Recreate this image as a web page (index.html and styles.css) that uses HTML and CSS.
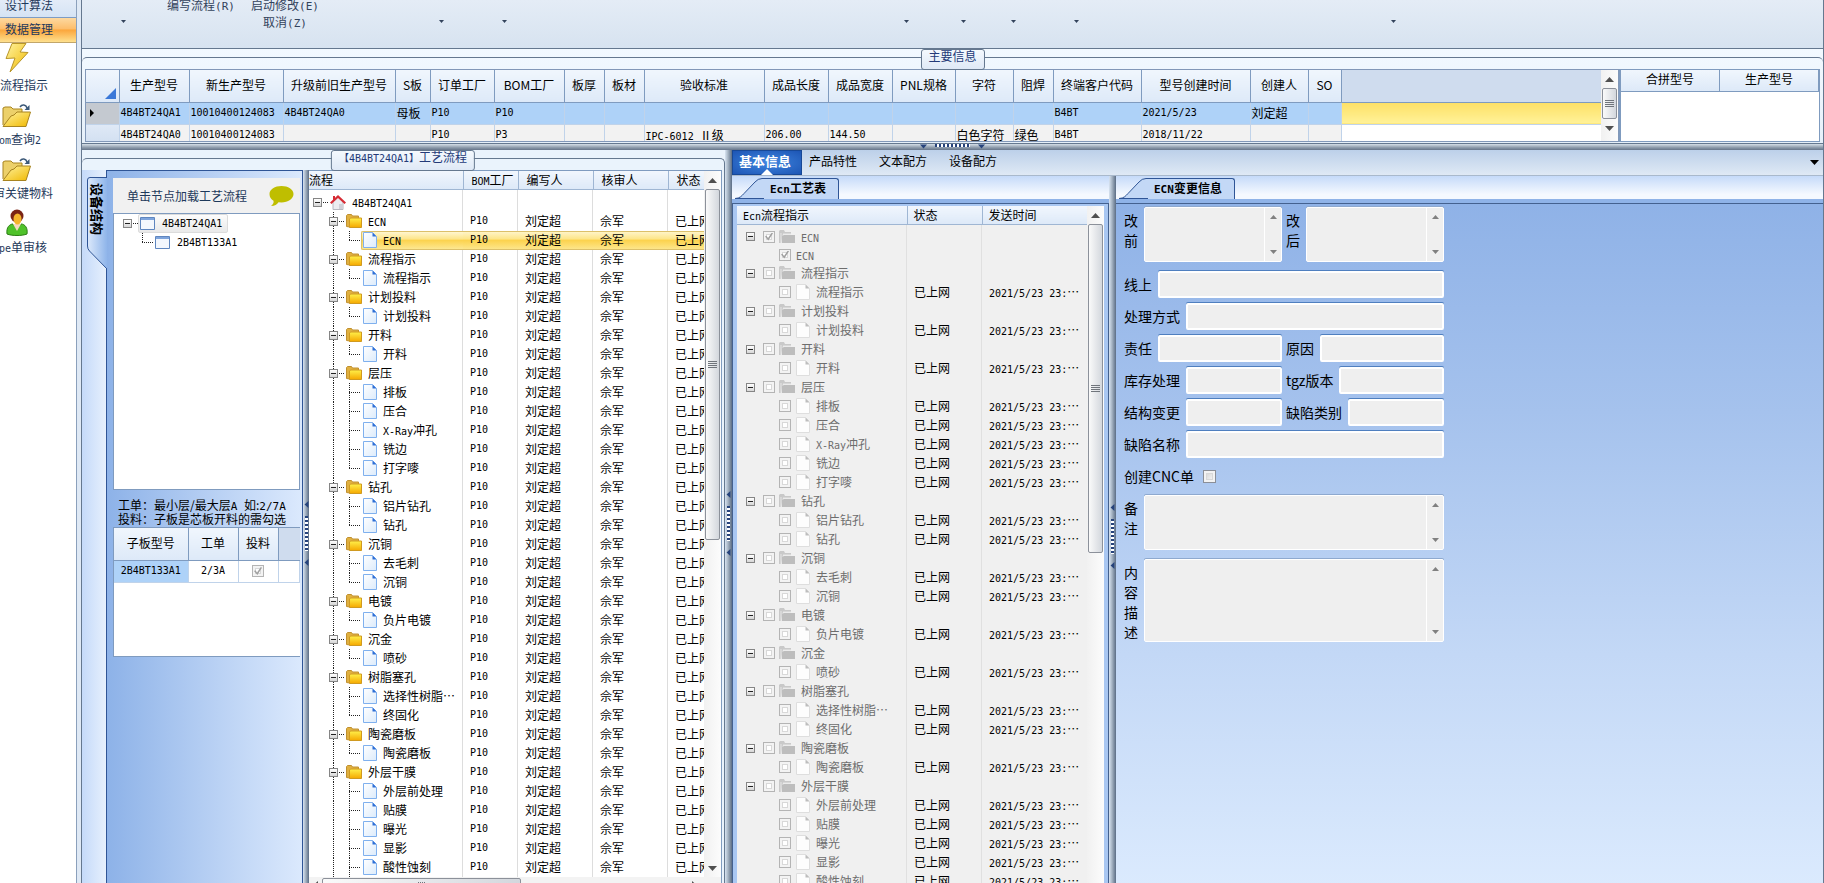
FILE: index.html
```
<!DOCTYPE html>
<html lang="zh-CN">

<head>
    <meta charset="UTF-8">
    <meta name="viewport" content="width=device-width, initial-scale=1.0">
    <title>工艺流程</title>
    <link rel="stylesheet" href="styles.css">
</head>

<body>
    <!-- Shared icons -->
    <svg class="symbols" aria-hidden="true">
        <defs>
            <linearGradient id="gold" x1="0" y1="0" x2="1" y2="1">
                <stop offset="0" stop-color="#fff3a0" />
                <stop offset="1" stop-color="#f0b800" />
            </linearGradient>
            <linearGradient id="amber" x1="0" y1="0" x2="0" y2="1">
                <stop offset="0" stop-color="#fff04a" />
                <stop offset="1" stop-color="#f5a800" />
            </linearGradient>
            <linearGradient id="sheet" x1="0" y1="0" x2="1" y2="1">
                <stop offset="0" stop-color="#ffffff" />
                <stop offset="1" stop-color="#dcebfb" />
            </linearGradient>
        </defs>
        <symbol id="i-folder" viewBox="0 0 16 14">
            <path d="M.5 12.5v-11l1-1h4l1 1.5h6v3H4v8z" fill="#e0b040" stroke="#c09030" />
            <path d="M3.5 13.5V5l1-1h11v9.5z" fill="url(#amber)" stroke="#d09a20" />
        </symbol>
        <symbol id="i-folder-off" viewBox="0 0 16 14">
            <path d="M0 13V1l1-1h4l1 2h6v2H4L2 13z" fill="#c9c9c9" />
            <path d="M3 13V6l2-1h11v8z" fill="#bdbdbd" />
            <path d="M2 3v10M4 4h8" stroke="#e6e6e6" />
        </symbol>
        <symbol id="i-file" viewBox="0 0 14 16">
            <path d="M.5.5h9l4 4v11H.5z" fill="url(#sheet)" stroke="#7fb0ee" />
            <path d="M9.5.5l4 4h-4z" fill="#2f6fd6" />
        </symbol>
        <symbol id="i-file-off" viewBox="0 0 14 16">
            <path d="M.5.5h9l4 4v11H.5z" fill="#fdfdfd" stroke="#dedede" />
            <path d="M9.5.5l4 4h-4z" fill="#bdbdbd" />
        </symbol>
        <symbol id="i-house" viewBox="0 0 16 16">
            <path d="M3 8l5-5 5 5v7.500H3z" fill="#ececf0" stroke="#b8b8c0" />
            <path d="M3 2h2v4H3zM0 8.500L8 1l8 7.500-1.500 1.500L8 4l-6.500 6z" fill="#d62b34" />
            <path d="M9 10h3v5H9z" fill="#d0d0d8" />
        </symbol>
        <symbol id="i-window" viewBox="0 0 15 13">
            <path d="M.5.5h14v12H.5z" fill="#f3f7fd" stroke="#5f86bf" />
            <path d="M1 1h13v2H1z" fill="#7ea4dc" />
        </symbol>
        <symbol id="i-open" viewBox="0 0 30 25">
            <path d="M1 22V5l2-1h6l2 2h9v5" fill="#ecd06a" stroke="#a88420" />
            <path d="M1 23.500L9 13l3-1 3-3h13.500l-4.500 14.500z" fill="url(#gold)" stroke="#a88420" />
            <path d="M18 4c2-3 6-2.500 7 1" fill="none" stroke="#3b5878" stroke-width="1.500" />
            <path d="M27.500 2v5h-5z" fill="#3b5878" />
        </symbol>
        <symbol id="i-up" viewBox="0 0 9 5">
            <path d="M0 5l4.500-5L9 5z" fill="currentColor" />
        </symbol>
        <symbol id="i-down" viewBox="0 0 9 5">
            <path d="M0 0h9L4.500 5z" fill="currentColor" />
        </symbol>
    </svg>

    <!-- Navigation -->
    <nav class="sidebar">
        <a href="#" class="nav-group">设计算法</a>
        <a href="#" class="nav-group active">数据管理</a>
        <div class="nav-items">
            <a href="#" class="nav-item">
                <svg width="24" height="32" viewBox="0 0 24 32"><path d="M7 1.500h14L15 10l8 .5L5 30l5-14-9 .5z" fill="url(#gold)" stroke="#b8962a" stroke-linejoin="round" /></svg>
                <span class="indent">流程指示</span>
            </a>
            <a href="#" class="nav-item">
                <svg width="30" height="25"><use href="#i-open" /></svg>
                <span><b class="en">Bom</b>查询<b class="en">2</b></span>
            </a>
            <a href="#" class="nav-item">
                <svg width="30" height="25"><use href="#i-open" /></svg>
                <span>评审关键物料</span>
            </a>
            <a href="#" class="nav-item">
                <svg width="22" height="28" viewBox="0 0 22 28">
                    <path d="M1 26c-1-7 3-10 6-10l4 5 4-5c4 0 7 4 6 10-5 2-15 2-20 0z" fill="#4fc22a" stroke="#2c7d15" />
                    <path d="M7 16l4 7 4-7z" fill="#f7d9c0" />
                    <circle cx="11" cy="8" r="6.500" fill="#7a2415" />
                    <ellipse cx="11.500" cy="11" rx="4" ry="5.500" fill="#f5b52c" />
                </svg>
                <span><b class="en">Type</b>单审核</span>
            </a>
        </div>
    </nav>

    <main>
        <!-- Ribbon -->
        <div class="ribbon">
            <button class="rb c1" aria-label="菜单"><svg class="caret"><use href="#i-down" /></svg></button>
            <button class="rb text c2">编写流程<b class="en">(R)</b></button>
            <button class="rb text c3">启动修改<b class="en">(E)</b><br>取消<b class="en">(Z)</b></button>
            <button class="rb c5" aria-label="菜单"><svg class="caret"><use href="#i-down" /></svg></button>
            <button class="rb c6" aria-label="菜单"><svg class="caret"><use href="#i-down" /></svg></button>
            <button class="rb c8" aria-label="菜单"><svg class="caret"><use href="#i-down" /></svg></button>
            <button class="rb c9" aria-label="菜单"><svg class="caret"><use href="#i-down" /></svg></button>
            <button class="rb c10" aria-label="菜单"><svg class="caret"><use href="#i-down" /></svg></button>
            <button class="rb c11" aria-label="菜单"><svg class="caret"><use href="#i-down" /></svg></button>
            <button class="rb c13" aria-label="菜单"><svg class="caret"><use href="#i-down" /></svg></button>
        </div>

        <!-- Main info -->
        <section class="info">
            <div class="frame">
                <h2 class="badge">主要信息</h2>
                <div class="info-body">
                    <div class="info-grid">
                        <table class="grid">
                            <colgroup>
                                <col class="w33"><col class="w70"><col class="w94"><col class="w112"><col class="w35"><col class="w64"><col class="w70">
                                <col class="w40"><col class="w40"><col class="w120"><col class="w64"><col class="w64"><col class="w63"><col class="w58">
                                <col class="w40"><col class="w88"><col class="w109"><col class="w58"><col class="w33"><col>
                            </colgroup>
                            <thead>
                                <tr>
                                    <th class="corner"><svg width="11" height="11"><path d="M11 0v11H0z" fill="#3b78d8" /></svg></th>
                                    <th>生产型号</th><th>新生产型号</th><th>升级前旧生产型号</th><th>S板</th><th>订单工厂</th><th>BOM工厂</th>
                                    <th>板厚</th><th>板材</th><th>验收标准</th><th>成品长度</th><th>成品宽度</th><th>PNL规格</th><th>字符</th>
                                    <th>阻焊</th><th>终端客户代码</th><th>型号创建时间</th><th>创建人</th><th>SO</th><th class="rest"></th>
                                </tr>
                            </thead>
                            <tbody>
                                <tr class="current">
                                    <td class="rowhead"><svg width="4" height="8"><path d="M0 0l4 4-4 4z" /></svg></td>
                                    <td class="en">4B4BT24QA1</td><td class="en">10010400124083</td><td class="en">4B4BT24QA0</td><td>母板</td>
                                    <td class="en">P10</td><td class="en">P10</td><td></td><td></td><td></td><td></td><td></td><td></td><td></td><td></td>
                                    <td class="en">B4BT</td><td class="en">2021/5/23</td><td>刘定超</td><td></td><td class="rest"></td>
                                </tr>
                                <tr>
                                    <td class="rowhead"></td>
                                    <td class="en">4B4BT24QA0</td><td class="en">10010400124083</td><td></td><td></td>
                                    <td class="en">P10</td><td class="en">P3</td><td></td><td></td><td><b class="en">IPC-6012 </b>Ⅱ级</td>
                                    <td class="en">206.00</td><td class="en">144.50</td><td></td><td>白色字符</td><td>绿色</td>
                                    <td class="en">B4BT</td><td class="en">2018/11/22</td><td></td><td></td><td class="rest"></td>
                                </tr>
                            </tbody>
                        </table>
                        <div class="vscroll">
                            <svg class="arrow"><use href="#i-up" /></svg>
                            <div class="thumb short"><i></i></div>
                            <svg class="arrow"><use href="#i-down" /></svg>
                        </div>
                    </div>
                    <div class="merge">
                        <table class="grid">
                            <thead><tr><th>合拼型号</th><th>生产型号</th></tr></thead>
                        </table>
                    </div>
                </div>
            </div>
        </section>

        <div class="split-h"><svg class="tri"><use href="#i-down" /></svg><i></i><svg class="tri"><use href="#i-down" /></svg></div>

        <div class="work">
            <!-- Process flow -->
            <section class="process">
                <div class="frame">
                    <h2 class="badge"><b class="en">【4B4BT24QA1】</b>工艺流程</h2>
                    <div class="process-body">
                        <div class="dock">
                            <button class="side-tab">
                                <svg width="20" height="96" viewBox="0 0 20 96">
                                    <defs><linearGradient id="tabfill"><stop offset="0" stop-color="#dce9fb" /><stop offset="1" stop-color="#8fb5ea" /></linearGradient></defs>
                                    <path d="M20 0.500v3H3q-2.500 0-2.500 2.500v66q0 3 2 5l17.500 18" fill="url(#tabfill)" stroke="#2f5596" />
                                </svg>
                                <span>设备结构</span>
                            </button>
                        </div>
                        <div class="device">
                            <div class="tip">
                                <span>单击节点加载工艺流程</span>
                                <svg width="25" height="22" viewBox="0 0 25 22"><path d="M12.500 1C19 1 24.500 4.500 24.500 9S19 17.500 12.500 17.500l-3-.2C8 19.500 6 21 2 21c2-1.500 3-3 2.500-5.200C2 14.500.5 12 .5 9 .5 4.500 6 1 12.500 1z" fill="#bfbe00" /></svg>
                            </div>
                            <ul class="device-tree">
                                <li><span class="toggle"></span><span class="stub"></span><span class="node on"><svg width="15" height="13"><use href="#i-window" /></svg><b class="en">4B4BT24QA1</b></span></li>
                                <li class="child"><span class="branch last"></span><span class="node"><svg width="15" height="13"><use href="#i-window" /></svg><b class="en">2B4BT133A1</b></span></li>
                            </ul>
                            <p class="hint">工单：最小层/最大层<b class="en">A </b>如:<b class="en">2/7A</b><br>投料：子板是芯板开料的需勾选</p>
                            <div class="sub-box">
                                <table class="grid sub">
                                    <colgroup><col class="w74"><col class="w50"><col class="w40"><col></colgroup>
                                    <thead><tr><th>子板型号</th><th>工单</th><th>投料</th><th class="rest"></th></tr></thead>
                                    <tbody><tr><td class="en picked">2B4BT133A1</td><td class="en">2/3A</td><td><input type="checkbox" class="check" aria-label="投料" checked disabled></td><td></td></tr></tbody>
                                </table>
                            </div>
                        </div>
                        <div class="split-v"><svg class="tri"><use href="#i-down" /></svg><i></i><svg class="tri"><use href="#i-down" /></svg></div>
                        <div class="flow">
                            <div class="flow-top">
                                <div class="clip">
                                    <table class="tree">
                                        <colgroup><col class="w154"><col class="w55"><col class="w75"><col class="w75"><col></colgroup>
                                        <thead><tr><th class="tight">流程</th><th><b class="en">BOM</b>工厂</th><th>编写人</th><th>核审人</th><th>状态</th></tr></thead>
                                        <tbody id="flow-rows"></tbody>
                                    </table>
                                </div>
                                <div class="vscroll">
                                    <svg class="arrow"><use href="#i-up" /></svg>
                                    <div class="thumb long"><i></i></div>
                                    <svg class="arrow end"><use href="#i-down" /></svg>
                                </div>
                            </div>
                            <div class="hscroll">
                                <svg class="arrow left"><use href="#i-down" /></svg>
                                <div class="thumb"><i></i></div>
                                <svg class="arrow right"><use href="#i-down" /></svg>
                            </div>
                        </div>
                    </div>
                </div>
            </section>

            <div class="split-v wide"><svg class="tri"><use href="#i-down" /></svg><i></i><svg class="tri"><use href="#i-down" /></svg></div>

            <!-- Details -->
            <section class="details">
                <div class="tabs">
                    <button class="tab active">基本信息</button>
                    <button class="tab">产品特性</button>
                    <button class="tab">文本配方</button>
                    <button class="tab">设备配方</button>
                    <svg class="more"><use href="#i-down" /></svg>
                </div>
                <div class="details-body">
                    <div class="pane ecn">
                        <div class="strip">
                            <button class="ptab"><svg width="30" height="21"><path d="M0 20.500c5 0 7-3 9-5L20 4q3-3.500 7-3.500h3v20z" fill="#c3d8f6" stroke="#2f5596" /></svg><span><b class="en">Ecn</b>工艺表</span></button>
                        </div>
                        <div class="pane-body">
                            <div class="clip">
                                <table class="tree off">
                                    <colgroup><col class="w170"><col class="w75"><col></colgroup>
                                    <thead><tr><th><b class="en">Ecn</b>流程指示</th><th>状态</th><th>发送时间</th></tr></thead>
                                    <tbody id="ecn-rows"></tbody>
                                </table>
                            </div>
                            <div class="vscroll">
                                <svg class="arrow"><use href="#i-up" /></svg>
                                <div class="thumb mid"><i></i></div>
                            </div>
                        </div>
                    </div>
                    <div class="split-v wide"><svg class="tri"><use href="#i-down" /></svg><i></i><svg class="tri"><use href="#i-down" /></svg></div>
                    <div class="pane change">
                        <div class="strip">
                            <button class="ptab"><svg width="30" height="21"><path d="M0 20.500c5 0 7-3 9-5L20 4q3-3.500 7-3.500h3v20z" fill="#c3d8f6" stroke="#2f5596" /></svg><span><b class="en">ECN</b>变更信息</span></button>
                        </div>
                        <div class="pane-body">
                            <form class="form">
                                <div class="field area"><label for="before">改前</label><div class="memo"><textarea id="before" readonly></textarea><div class="bar"><svg><use href="#i-up" /></svg><svg><use href="#i-down" /></svg></div></div></div>
                                <div class="field area"><label for="after">改后</label><div class="memo"><textarea id="after" readonly></textarea><div class="bar"><svg><use href="#i-up" /></svg><svg><use href="#i-down" /></svg></div></div></div>
                                <div class="field full"><label for="online">线上</label><input id="online" type="text" readonly></div>
                                <div class="field full"><label for="method">处理方式</label><input id="method" type="text" readonly></div>
                                <div class="field"><label for="duty">责任</label><input id="duty" type="text" readonly></div>
                                <div class="field"><label for="reason">原因</label><input id="reason" type="text" readonly></div>
                                <div class="field"><label for="stock">库存处理</label><input id="stock" type="text" readonly></div>
                                <div class="field"><label for="tgz">tgz版本</label><input id="tgz" type="text" readonly></div>
                                <div class="field"><label for="struct">结构变更</label><input id="struct" type="text" readonly></div>
                                <div class="field"><label for="kind">缺陷类别</label><input id="kind" type="text" readonly></div>
                                <div class="field full"><label for="defect">缺陷名称</label><input id="defect" type="text" readonly></div>
                                <div class="field full"><label for="cnc">创建CNC单</label><input id="cnc" class="check live" type="checkbox"></div>
                                <div class="field area full"><label for="remark">备注</label><div class="memo"><textarea id="remark" readonly></textarea><div class="bar"><svg><use href="#i-up" /></svg><svg><use href="#i-down" /></svg></div></div></div>
                                <div class="field area full tall"><label for="content">内容描述</label><div class="memo"><textarea id="content" readonly></textarea><div class="bar"><svg><use href="#i-up" /></svg><svg><use href="#i-down" /></svg></div></div></div>
                            </form>
                        </div>
                    </div>
                </div>
            </section>
        </div>
    </main>

    <script src="script.js"></script>
</body>

</html>
```
FILE: styles.css
```
* {
    box-sizing: border-box;
}

html {
    height: 100%;
    overflow: hidden;
}

/* the window runs a little past the bottom of the screen */
body {
    margin: 0;
    height: calc(100vh + 14px);
    overflow: hidden;
    display: flex;
    font-family: "Noto Sans CJK SC", sans-serif;
    font-size: 12px;
    line-height: 18px;
    color: #000;
    background-color: #dfe9f5;
}

button,
input,
textarea {
    font: inherit;
    color: inherit;
    margin: 0;
    padding: 0;
    border: 0;
    background: none;
}

svg {
    display: block;
    flex: none;
}

a {
    color: inherit;
    text-decoration: none;
}

h2,
p,
ul {
    margin: 0;
    padding: 0;
    list-style: none;
}

table {
    border-collapse: collapse;
    table-layout: fixed;
    width: 100%;
}

.symbols {
    position: absolute;
    width: 0;
    height: 0;
}

/* fixed width latin text */
.en {
    font-family: "DejaVu Sans Mono", "Noto Sans CJK SC", monospace;
    font-size: 10px;
    font-weight: normal;
}

b.en {
    line-height: 10px;
}

/* column widths */
.w33 { width: 33px; }
.w35 { width: 35px; }
.w40 { width: 40px; }
.w50 { width: 50px; }
.w55 { width: 55px; }
.w58 { width: 58px; }
.w63 { width: 63px; }
.w64 { width: 64px; }
.w70 { width: 70px; }
.w74 { width: 74px; }
.w75 { width: 75px; }
.w88 { width: 88px; }
.w94 { width: 94px; }
.w109 { width: 109px; }
.w112 { width: 112px; }
.w120 { width: 120px; }
.w154 { width: 154px; }
.w170 { width: 170px; }

/* Navigation */
.sidebar {
    flex: none;
    width: 77px;
    overflow: hidden;
    background-color: #fff;
    border-right: 1px solid #8ba0bc;
    color: #1e395b;
}

.nav-group {
    display: block;
    height: 18px;
    padding-left: 5px;
    line-height: 10px;
    background-image: linear-gradient(#e3ecf8, #d5e3f4);
    border-bottom: 1px solid #7d9cc4;
}

.nav-group.active {
    height: 25px;
    line-height: 22px;
    background-image: linear-gradient(#fdd9a0, #fdbe6c 45%, #fba63c 50%, #fee08e);
    border-bottom-color: #c2a66a;
}

.nav-items {
    width: 34px;
}

.nav-item {
    display: flex;
    flex-direction: column;
    align-items: center;
    justify-content: flex-end;
    gap: 2px;
    height: 54px;
    padding-bottom: 3px;
    white-space: nowrap;
}

.nav-item .indent {
    padding-left: 14px;
}

main {
    flex: 1;
    min-width: 0;
    display: flex;
    flex-direction: column;
    margin-left: 4px;
    border-left: 1px solid #65788f;
    border-right: 1px solid #65788f;
}

/* Ribbon */
.ribbon {
    flex: none;
    height: 48px;
    display: grid;
    grid-template-columns: 82px 74px 94px 78px 63px 62px 343px 56px 58px 43px 82px 246px 60px;
    background-image: linear-gradient(#e4ecf6, #d7e3f0);
    color: #33435c;
}

.rb {
    grid-row: 1;
    display: flex;
    justify-content: center;
    padding-top: 20px;
}

.rb.text {
    display: block;
    padding-top: 0;
    margin-top: -4px;
    line-height: 17px;
    height: 34px;
    white-space: nowrap;
}

.rb.text .en {
    font-size: 11px;
}

.rb.text.c2 {
    height: 17px;
}

.c1 { grid-column: 1; }
.c2 { grid-column: 2; }
.c3 { grid-column: 3; }
.c5 { grid-column: 5; }
.c6 { grid-column: 6; }
.c8 { grid-column: 8; }
.c9 { grid-column: 9; }
.c10 { grid-column: 10; }
.c11 { grid-column: 11; }
.c13 { grid-column: 13; }

.caret {
    width: 5px;
    height: 3px;
}

/* Framed groups */
.frame {
    position: relative;
    margin-top: 8px;
    border-top: 1px solid #65788f;
    border-radius: 5px 5px 0 0;
}

.badge {
    position: absolute;
    top: -9px;
    left: 50%;
    transform: translateX(-50%);
    height: 21px;
    padding: 0 7px;
    font-size: 12px;
    font-weight: normal;
    line-height: 12px;
    white-space: nowrap;
    color: #243a78;
    background-image: linear-gradient(#f4f9fe, #dfe9f6);
    border: 1px solid #65788f;
    border-radius: 3px;
    z-index: 1;
}

.info {
    flex: none;
    height: 96px;
    border-top: 1px solid #65788f;
    background-image: linear-gradient(#f2f9ff, #e6f0fa);
    border-bottom: 1px solid #65788f;
}

.info-body {
    display: flex;
    height: 74px;
    margin-top: 11px;
    padding: 0 3px 1px;
}

.info-grid {
    flex: 1;
    display: flex;
    overflow: hidden;
    border: 1px solid #8298b8;
    background-color: #fff;
}

/* Grid tables */
.grid th {
    height: 32px;
    padding: 0 0 2px;
    line-height: 16px;
    font-weight: normal;
    white-space: nowrap;
    background-image: linear-gradient(#f0f6fd, #dde9f8);
    border-right: 1px solid #7f9bbf;
    border-bottom: 1px solid #7f9bbf;
}

.grid td {
    height: 22px;
    padding: 0 1px;
    line-height: 20px;
    white-space: nowrap;
    overflow: hidden;
    background-color: #f2f2f2;
    border-right: 1px solid #c0d3ea;
    border-bottom: 1px solid #c0d3ea;
}

.grid .current td {
    background-color: #aed2f8;
}

.grid th.rest {
    background: #cfdcee;
    border-right: 0;
}

.grid td.rest {
    background-color: #fff;
    border-right: 0;
}

.grid .current td.rest {
    background-image: linear-gradient(#fee065, #fff299);
}

.grid td.rowhead {
    background-image: linear-gradient(#dfe9f6, #d0def0);
}

.grid .current td.rowhead {
    padding-left: 4px;
    background: #c4c9d0;
}

.corner svg {
    margin: 18px 0 0 19px;
}

.merge {
    width: 201px;
    flex: none;
    background-color: #fff;
    border: 1px solid #7f9bbf;
    border-width: 1px 1px 1px 2px;
}

.merge .grid th {
    height: 21px;
}

/* Scroll bars */
.vscroll {
    flex: none;
    width: 17px;
    display: flex;
    flex-direction: column;
    align-items: center;
    background-image: linear-gradient(90deg, #f1f1f1, #fcfcfc);
}

.arrow {
    width: 9px;
    height: 5px;
    margin: 7px 0 6px;
    color: #505050;
}

.arrow.end {
    margin-top: auto;
}

.thumb {
    display: flex;
    align-items: center;
    justify-content: center;
    width: 15px;
    background-image: linear-gradient(90deg, #fafafa, #d3d7dd);
    border: 1px solid #8c919a;
    border-radius: 2px;
}

.thumb i {
    width: 9px;
    height: 7px;
    background-image: repeating-linear-gradient(#70757c 0 1px, transparent 1px 2px);
}

.thumb.short { height: 31px; }
.thumb.mid { height: 329px; }
.thumb.long { height: 351px; }

.hscroll {
    flex: none;
    display: flex;
    align-items: center;
    height: 16px;
    padding: 0 20px 0 0;
    background-color: #f3f3f3;
}

.hscroll .thumb {
    width: 199px;
    height: 14px;
}

.hscroll .thumb i {
    width: 8px;
    background-image: repeating-linear-gradient(90deg, #70757c 0 1px, transparent 1px 2px);
}

.hscroll .arrow {
    margin: 0 2px;
}

.left { transform: rotate(90deg); }

.hscroll .right {
    transform: rotate(-90deg);
    margin-left: auto;
}

/* Splitters */
.split-h {
    flex: none;
    height: 6px;
    display: flex;
    justify-content: center;
    gap: 8px;
    background-image: linear-gradient(#d5dfe8, #8c9aaa 60%, #66758a);
}

.split-h i {
    width: 35px;
    height: 3px;
    background-image: repeating-linear-gradient(90deg, #26437c 0 2px, #fff 2px 4px);
}

.tri {
    width: 7px;
    height: 5px;
    color: #26437c;
}

.split-v {
    flex: none;
    width: 6px;
    display: flex;
    flex-direction: column;
    align-items: center;
    justify-content: center;
    gap: 9px;
    background-image: linear-gradient(90deg, #d8e4f2, #a9b7c6 40%, #5b6d85);
}

.split-v.wide {
    width: 7px;
}

.split-v .tri {
    transform: rotate(90deg);
}

.split-v i {
    width: 3px;
    height: 35px;
    background-image: repeating-linear-gradient(#26437c 0 2px, #fff 2px 4px);
}

/* Work area */
.work {
    flex: 1;
    min-height: 0;
    display: flex;
}

.process {
    flex: none;
    width: 643px;
    display: flex;
    background-color: #eaf3fc;
}

.process .frame {
    flex: 1;
    display: flex;
    border-right: 1px solid #65788f;
}

.process-body {
    flex: 1;
    min-width: 0;
    display: flex;
    margin-top: 11px;
    padding-right: 2px;
}

.dock {
    flex: none;
    width: 25px;
    padding: 4px 0 0 5px;
    background-image: linear-gradient(90deg, #c5daf9, #e6f0fd);
    border-right: 1px solid #2f5596;
}

.side-tab {
    display: block;
    position: relative;
    width: 20px;
    height: 96px;
}

.side-tab span {
    position: absolute;
    top: 9px;
    left: 1px;
    writing-mode: vertical-rl;
    text-orientation: sideways;
    font-size: 13px;
    font-weight: bold;
}

.device {
    flex: none;
    width: 196px;
    padding: 7px 2px 0 6px;
    background-image: linear-gradient(90deg, #8db2e8, #dbe9fd);
    border-top: 1px solid #2f5596;
    border-right: 1px solid #2f5596;
}

.tip {
    display: flex;
    align-items: center;
    justify-content: space-between;
    height: 35px;
    padding: 0 6px 0 14px;
    color: #1e395b;
    background-color: #f1f1f1;
}

.device-tree {
    height: 277px;
    padding: 0 0 0 9px;
    background-color: #fff;
    border: 1px solid #7f9bbf;
}

.device-tree li {
    display: flex;
    align-items: center;
    height: 19px;
}

.device-tree .child {
    padding-left: 19px;
}

.node {
    display: flex;
    align-items: center;
    gap: 7px;
    height: 19px;
    padding: 0 6px 0 1px;
}

.node.on {
    background-image: linear-gradient(#fcfcfc, #e9e9e9);
    border: 1px solid #dcdcdc;
    border-radius: 2px;
    padding: 0 5px 0 1px;
}

.toggle {
    flex: none;
    width: 9px;
    height: 9px;
    border: 1px solid #858585;
    background: linear-gradient(#222, #222) center / 5px 1px no-repeat, linear-gradient(#fff, #d6d6d6);
}

.stub {
    flex: none;
    width: 6px;
    height: 1px;
    background-image: repeating-linear-gradient(90deg, transparent 0 1px, #222 1px 2px);
}

/* dotted connector in front of a leaf */
.branch {
    flex: none;
    width: 12px;
    height: 19px;
    background: repeating-linear-gradient(#222 0 1px, transparent 1px 2px) left top / 1px 19px no-repeat,
        repeating-linear-gradient(90deg, #222 0 1px, transparent 1px 2px) left center / 11px 1px no-repeat;
}

.branch.last {
    background-size: 1px 10px, 11px 1px;
}

.hint {
    height: 37px;
    padding: 8px 0 0 5px;
    line-height: 14px;
    white-space: nowrap;
}

.hint .en {
    font-size: 11px;
}

.sub-box {
    height: 130px;
    background-color: #fff;
    border: 1px solid #7f9bbf;
    border-right: 0;
}

.sub td {
    text-align: center;
    background-color: #fff;
}

.sub td.picked {
    background-color: #aed2f8;
}

/* Check boxes */
.check {
    appearance: none;
    flex: none;
    width: 12px;
    height: 12px;
    border: 1px solid #b4b4b4;
    background: #fff;
    box-shadow: inset 0 0 0 2px #f3f3f3, inset 0 0 0 3px #d8d8d8;
}

.check:checked::before {
    content: "";
    display: block;
    width: 8px;
    height: 8px;
    margin: 1px;
    background-color: #a0a0a0;
    clip-path: polygon(0 50%, 18% 40%, 38% 68%, 85% 0, 100% 8%, 42% 100%);
}

.sub .check {
    display: block;
    margin: 0 auto;
}

.check.live {
    width: 13px;
    height: 13px;
    border-color: #8b8f98;
    background-image: linear-gradient(135deg, #ccc, #fff);
}

/* Tree tables */
.flow {
    flex: 1;
    min-width: 0;
    display: flex;
    flex-direction: column;
    background-color: #fff;
    border-top: 1px solid #7f9bbf;
    border-right: 1px solid #7f9bbf;
    margin-bottom: 4px;
}

.flow-top {
    flex: 1;
    min-height: 0;
    display: flex;
}

.clip {
    flex: 1;
    min-width: 0;
    overflow: hidden;
    background-image: linear-gradient(#ddd, #ddd), linear-gradient(#ddd, #ddd), linear-gradient(#ddd, #ddd), linear-gradient(#ddd, #ddd);
    background-size: 1px 100%;
    background-position: 153px 0, 208px 0, 283px 0, 358px 0;
    background-repeat: no-repeat;
}

.tree th {
    height: 18px;
    padding: 0 0 0 8px;
    line-height: 16px;
    font-weight: normal;
    text-align: left;
    white-space: nowrap;
    overflow: hidden;
    background-image: linear-gradient(#f1f6fd, #dde9f8);
    border-right: 1px solid #9fb6d3;
    border-bottom: 1px solid #9fb6d3;
}

.tree th.tight {
    padding-left: 0;
}

.tree th:last-child {
    border-right: 0;
}

.tree tbody::before {
    content: "";
    display: block;
    height: 3px;
}

.tree td {
    height: 19px;
    padding: 0 0 0 7px;
    line-height: 18px;
    white-space: nowrap;
    overflow: hidden;
}

.tree td.name {
    padding: 0;
}

.cell {
    display: flex;
    align-items: center;
    height: 19px;
}

.lv0 {
    padding-left: 4px;
}

.lv1 {
    padding-left: 20px;
    background: repeating-linear-gradient(#222 0 1px, transparent 1px 2px) 24px 0 / 1px 100% no-repeat;
}

.lv2 {
    padding-left: 40px;
    background: repeating-linear-gradient(#222 0 1px, transparent 1px 2px) 24px 0 / 1px 100% no-repeat;
}

.cell .label {
    display: flex;
    align-items: center;
    height: 19px;
    flex: 1;
    gap: 6px;
    padding-left: 2px;
}

.lv2 .label {
    gap: 6px;
}

.selected .label {
    border: solid #dcc06a;
    border-width: 1px 0 1px 1px;
    border-radius: 2px 0 0 2px;
    padding-left: 1px;
}

.selected .label,
.selected td:not(.name) {
    background-image: linear-gradient(#fff6cf, #fde68c 40%, #fcd34f 50%, #fde891);
}

.selected td:not(.name) {
    box-shadow: inset 0 1px #dcc06a, inset 0 -1px #dcc06a;
}

.off .cell {
    background: none;
    color: #6d6d6d;
}

.off .lv1 {
    padding-left: 9px;
}

.off .lv1 .check {
    margin: 0 2px 0 8px;
}

.off .lv2 {
    padding-left: 42px;
}

.off .lv2 .check {
    margin-right: 3px;
}

.off .low td,
.off .low .cell {
    height: 18px;
}

/* Details */
.details {
    flex: 1;
    min-width: 0;
    display: flex;
    flex-direction: column;
}

.tabs {
    flex: none;
    display: flex;
    align-items: stretch;
    height: 26px;
    padding-right: 4px;
    background-image: linear-gradient(#bcd0e9, #dfe9f5);
    border-bottom: 1px solid #a9b9cc;
}

.tab {
    width: 70px;
    padding-bottom: 4px;
}

.tab.active {
    position: relative;
    margin-right: -4px;
    padding-right: 4px;
    font-size: 13px;
    font-weight: bold;
    color: #fff;
    background-image: radial-gradient(#3f86e0, #1d55b4);
    border: 1px solid #174896;
}

.tab.active::after {
    content: "";
    position: absolute;
    left: 50%;
    bottom: -1px;
    margin-left: -6px;
    border: 6px solid transparent;
    border-top: 0;
    border-bottom-color: #fff;
}

.more {
    width: 9px;
    height: 5px;
    margin: 10px 0 0 auto;
}

.details-body {
    flex: 1;
    min-height: 0;
    display: flex;
}

.pane {
    display: flex;
    flex-direction: column;
    min-width: 0;
}

.ecn {
    flex: none;
    width: 377px;
}

.change {
    flex: 1;
}

.strip {
    flex: none;
    display: flex;
    height: 27px;
    padding-top: 2px;
    background-image: linear-gradient(#c5daf9, #f5f9ff 80%);
    border-bottom: 4px solid #8fb3e8;
}

.ptab {
    display: flex;
    height: 21px;
    margin-left: 3px;
    font-weight: bold;
}

.ptab span {
    padding: 0 12px 0 6px;
    line-height: 18px;
    background-color: #c3d8f6;
    border-top: 1px solid #2f5596;
    border-right: 1px solid #2f5596;
    border-radius: 0 3px 0 0;
}

.ptab .en {
    font-size: 11px;
    font-weight: bold;
}

.ptab svg {
    margin-right: -1px;
}

.pane-body {
    flex: 1;
    min-height: 0;
    display: flex;
    border-top: 1px solid #44618f;
}

.ecn .pane-body {
    padding: 2px 4px 0;
    background-color: #a9c7f2;
    border-left: 1px solid #44618f;
    border-right: 1px solid #44618f;
}

.ecn .clip {
    background-color: #f0f0f0;
    background-image: linear-gradient(#e0e0e0, #e0e0e0), linear-gradient(#e0e0e0, #e0e0e0);
    background-position: 169px 0, 244px 0;
}

.off th {
    padding-left: 6px;
}

.change .pane-body {
    padding: 3px 8px;
    background-image: linear-gradient(#8fb2e7, #a5c2ed 30%, #c3d8f6 65%, #dcebfe);
}

/* ECN form */
.form {
    width: 320px;
    align-self: flex-start;
    display: grid;
    grid-template-columns: 1fr 1fr;
    gap: 5px 4px;
    font-size: 14px;
    line-height: 20px;
}

.field {
    display: flex;
    align-items: center;
    gap: 6px;
    min-width: 0;
    height: 27px;
}

.field label {
    flex: none;
    padding-bottom: 2px;
    white-space: nowrap;
}

.field input[type="text"] {
    flex: 1;
    min-width: 0;
    height: 27px;
    background-color: #efefef;
    border: 2px solid #fff;
    border-radius: 2px;
    box-shadow: 0 -1px #4f7fbf;
}

.field .check {
    margin-left: 3px;
}

.full {
    grid-column: 1 / -1;
}

.area {
    align-items: flex-start;
    height: 59px;
}

.area.tall {
    height: 83px;
}

.area label {
    width: 14px;
    padding-top: 3px;
    white-space: normal;
    word-break: break-all;
}

.memo {
    flex: 1;
    min-width: 0;
    height: 55px;
    display: flex;
    background-color: #efefef;
    border: 1px solid #fff;
    border-radius: 2px;
    box-shadow: 0 -1px #8ea9cf;
}

.tall .memo {
    height: 83px;
}

.memo textarea {
    flex: 1;
    min-width: 0;
    resize: none;
}

.bar {
    width: 17px;
    display: flex;
    flex-direction: column;
    justify-content: space-between;
    align-items: center;
    padding: 7px 0;
    color: #808080;
    border-left: 1px solid #fff;
}

.bar svg {
    width: 7px;
    height: 4px;
}
```
FILE: script.js
```
const flow = [
    ['ECN', ['ECN']],
    ['流程指示', ['流程指示']],
    ['计划投料', ['计划投料']],
    ['开料', ['开料']],
    ['层压', ['排板', '压合', 'X-Ray冲孔', '铣边', '打字嘜']],
    ['钻孔', ['铝片钻孔', '钻孔']],
    ['沉铜', ['去毛刺', '沉铜']],
    ['电镀', ['负片电镀']],
    ['沉金', ['喷砂']],
    ['树脂塞孔', ['选择性树脂…', '终固化']],
    ['陶瓷磨板', ['陶瓷磨板']],
    ['外层干膜', ['外层前处理', '贴膜', '曝光', '显影', '酸性蚀刻']]
];

function icon(name, width, height) {
    return `<svg width="${width}" height="${height}"><use href="#i-${name}" /></svg>`;
}

// latin runs are set in the fixed width font
function text(value) {
    return '<span>' + value.replace(/[A-Za-z0-9-]+/g, '<b class="en">$&</b>') + '</span>';
}

function flowRow(cell, cls) {
    return `<tr class="${cls}"><td class="name">${cell}</td><td class="en">P10</td><td>刘定超</td><td>佘军</td><td>已上网</td></tr>`;
}

function ecnRow(cell, sent, cls) {
    const cols = sent ? '<td>已上网</td><td><b class="en">2021/5/23 23:</b>…</td>' : '<td></td><td></td>';
    return `<tr class="${cls}"><td class="name">${cell}</td>${cols}</tr>`;
}

let flowHtml = `<tr><td class="name"><div class="cell lv0"><span class="toggle"></span><span class="stub"></span><span class="label">${icon('house', 16, 16)}${text('4B4BT24QA1')}</span></div></td><td></td><td></td><td></td><td></td></tr>`;
let ecnHtml = '';

flow.forEach(([group, steps], g) => {
    flowHtml += flowRow(`<div class="cell lv1"><span class="toggle"></span><span class="stub"></span><span class="label">${icon('folder', 16, 14)}${text(group)}</span></div>`, '');
    ecnHtml += ecnRow(`<div class="cell lv1"><span class="toggle"></span><input type="checkbox" class="check" aria-label="${group}" disabled ${g === 0 ? 'checked' : ''}><span class="label">${icon('folder-off', 16, 14)}${text(group)}</span></div>`, false, g === 0 ? 'low' : '');

    steps.forEach((step, i) => {
        // the last group goes on below the visible rows
        const last = i === steps.length - 1 && g !== flow.length - 1;
        flowHtml += flowRow(`<div class="cell lv2"><span class="branch ${last ? 'last' : ''}"></span><span class="label">${icon('file', 14, 16)}${text(step)}</span></div>`, g === 0 ? 'selected' : '');
        ecnHtml += ecnRow(`<div class="cell lv2"><input type="checkbox" class="check" aria-label="${step}" disabled ${g === 0 ? 'checked' : ''}><span class="label">${g === 0 ? '' : icon('file-off', 14, 16)}${text(step)}</span></div>`, g !== 0, g === 0 ? 'low' : '');
    });
});

document.getElementById('flow-rows').innerHTML = flowHtml;
document.getElementById('ecn-rows').innerHTML = ecnHtml;
```
